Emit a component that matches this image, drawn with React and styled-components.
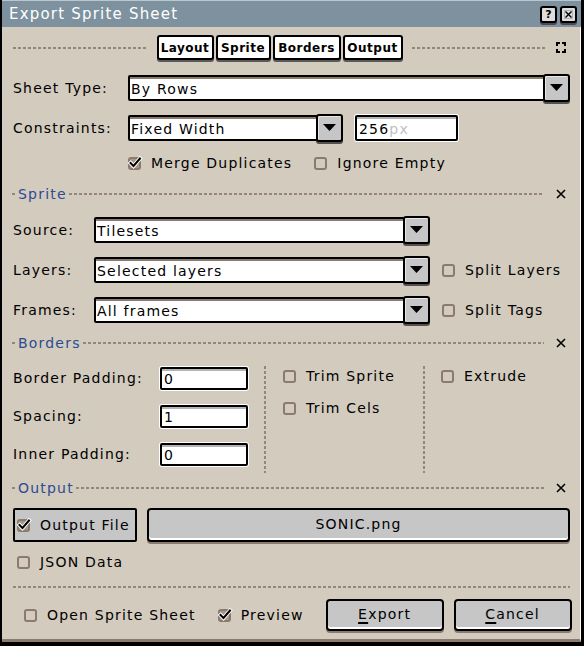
import React from 'react';
import styled, { createGlobalStyle } from 'styled-components';

const face = '#d3cbbe';
const shade = '#8b7b6e';
const dashColor = '#978575';
const blue = '#2c4c91';
const grey = '#c6c6c6';

const Global = createGlobalStyle`
  body {
    margin: 0;
    background: ${face};
  }
  * {
    box-sizing: border-box;
  }
`;

const Window = styled.div`
  width: 584px;
  height: 646px;
  display: flex;
  flex-direction: column;
  border-left: 2px solid #000;
  border-right: 3px solid #000;
  border-bottom: 4px solid #000;
  background: ${face};
  color: #000;
  font-family: 'DejaVu Sans', sans-serif;
  font-size: 14px;
  letter-spacing: 1.2px;
`;

const TitleBar = styled.div`
  height: 27px;
  flex: none;
  display: flex;
  align-items: center;
  padding: 0 4px 1px 7px;
  background: #7d929e;
  border-top: 1px solid #b9c7cf;
  color: #fff;
  font-size: 15px;
`;

const TitleButtons = styled.div`
  margin-left: auto;
  display: flex;
  gap: 3px;
  padding-top: 2px;
`;

const TitleButton = styled.div`
  width: 17px;
  height: 17px;
  display: flex;
  align-items: center;
  justify-content: center;
  background: #ddd;
  border: 2px solid #000;
  border-radius: 3px;
  box-shadow: 0 2px 0 #4e4650;
  color: #000;
  font-size: 11px;
  font-weight: bold;
  letter-spacing: 0;
`;

const Body = styled.div`
  flex: 1;
  display: flex;
  flex-direction: column;
  padding: 0 10px 0 11px;
  border-right: 1px solid #fff;
  border-bottom: 3px solid ${shade};
`;

const Dashes = styled.div`
  flex: ${(p) => (p.$fill ? 1 : 'none')};
  width: ${(p) => (p.$fill ? 'auto' : '100%')};
  height: 2px;
  background-image: repeating-linear-gradient(
    90deg,
    ${dashColor} 0 3px,
    transparent 3px 5px
  );
`;

const VDashes = styled.div`
  width: 2px;
  flex: none;
  align-self: flex-start;
  margin-top: 7px;
  height: 107px;
  background-image: repeating-linear-gradient(
    180deg,
    ${dashColor} 0 3px,
    transparent 3px 5px
  );
`;

const TabRow = styled.div`
  height: 41px;
  flex: none;
  display: flex;
  align-items: center;
  gap: 9px;
  padding-right: 4px;
`;

const Tabs = styled.div`
  display: flex;
  gap: 2px;
`;

const Tab = styled.div`
  width: ${(p) => p.$w}px;
  height: 25px;
  display: flex;
  align-items: center;
  justify-content: center;
  background: #fff;
  border: 2px solid #000;
  border-radius: 3px;
  box-shadow: 0 2px 0 #5a5a5a;
  font-size: 12px;
  font-weight: bold;
  letter-spacing: 0.5px;
`;

const Row = styled.div`
  height: ${(p) => p.$h}px;
  flex: none;
  display: flex;
  align-items: center;
  padding-left: ${(p) => p.$indent || 0}px;
  gap: ${(p) => p.$gap || 0}px;
`;

const Label = styled.div`
  width: ${(p) => p.$w}px;
  flex: none;
  white-space: nowrap;
`;

const Combo = styled.div`
  display: flex;
  align-items: center;
  flex: ${(p) => (p.$w ? 'none' : 1)};
  width: ${(p) => (p.$w ? `${p.$w}px` : 'auto')};
`;

const Field = styled.div`
  flex: 1;
  height: 26px;
  display: flex;
  align-items: center;
  padding: 2px 0 0 1px;
  background: #fff;
  border: 2px solid #000;
  border-radius: 2px;
  box-shadow: inset 0 2px 0 ${shade};
  white-space: nowrap;
`;

const DropButton = styled.div`
  width: 27px;
  height: 28px;
  flex: none;
  margin-left: -2px;
  display: flex;
  align-items: center;
  justify-content: center;
  background: ${grey};
  border: 2px solid #000;
  border-radius: 3px;
  box-shadow: inset 1px 1px 0 #e6e6e6, 0 2px 0 #55504c;
`;

const Input = styled.div`
  width: ${(p) => p.$w}px;
  height: ${(p) => p.$h}px;
  flex: none;
  display: flex;
  align-items: center;
  padding: 1px 0 0 2px;
  background: #fff;
  border: 2px solid #000;
  border-radius: 2px;
  box-shadow: 0 0 0 1px #fff, inset 0 2px 0 #b4b4b4;
`;

const Unit = styled.span`
  color: #c0c0c0;
`;

const CheckLabel = styled.div`
  display: flex;
  align-items: center;
  gap: 10px;
  white-space: nowrap;
`;

const SectionHead = styled.div`
  height: ${(p) => p.$h}px;
  flex: none;
  display: flex;
  align-items: center;
  gap: 2px;
  margin-left: -1px;
  padding-right: 4px;
`;

const SectionTitle = styled.div`
  color: ${blue};
`;

const CloseX = styled.div`
  margin-left: 10px;
  display: flex;
`;

const BordersBox = styled.div`
  height: 119px;
  flex: none;
  display: flex;
  padding-top: 3px;
`;

const LeftCol = styled.div`
  width: 251px;
  flex: none;
  display: flex;
  flex-direction: column;
`;

const CheckCol = styled.div`
  width: ${(p) => (p.$w ? `${p.$w}px` : 'auto')};
  flex: ${(p) => (p.$w ? 'none' : 1)};
  display: flex;
  flex-direction: column;
  padding: 1px 0 0 ${(p) => p.$pad}px;
`;

const Button = styled.div`
  height: ${(p) => p.$h}px;
  width: ${(p) => (p.$w ? `${p.$w}px` : 'auto')};
  flex: ${(p) => (p.$w ? 'none' : 1)};
  display: flex;
  align-items: center;
  justify-content: center;
  padding-bottom: 2px;
  background: ${grey};
  border: 2px solid #000;
  border-radius: 4px;
  box-shadow: inset 0 -2px 0 #fff, 0 2px 0 ${shade};
  white-space: nowrap;

  u {
    text-underline-offset: 3px;
    text-decoration-thickness: 2px;
  }
`;

const ToggleButton = styled.div`
  width: 124px;
  height: 34px;
  flex: none;
  display: flex;
  align-items: center;
  gap: 10px;
  padding-left: 2px;
  background: ${grey};
  border: 2px solid #000;
  border-radius: 2px;
  white-space: nowrap;
`;

const ButtonGroup = styled.div`
  margin-left: auto;
  display: flex;
  gap: 10px;
`;

const Box = ({ checked }) => (
  <svg width="13" height="13" viewBox="0 0 13 13" style={{ overflow: 'visible', flex: 'none' }}>
    <rect x="1" y="1" width="11" height="11" rx="2" fill={checked ? '#a89888' : 'none'} stroke={shade} strokeWidth="2" />
    {checked && (
      <>
        <polyline points="2.5,6 5.5,9 12,1.5" fill="none" stroke="#fff" strokeWidth="4" strokeLinecap="square" />
        <polyline points="2.5,6 5.5,9 12,1.5" fill="none" stroke="#000" strokeWidth="2" strokeLinecap="square" />
      </>
    )}
  </svg>
);

const Check = ({ checked, children }) => (
  <CheckLabel>
    <Box checked={checked} />
    <span>{children}</span>
  </CheckLabel>
);

const Arrow = () => (
  <svg width="13" height="8" viewBox="0 0 13 8">
    <polygon points="0,0 13,0 6.5,7" fill="#000" />
  </svg>
);

const XIcon = () => (
  <svg width="10" height="10" viewBox="0 0 10 10">
    <path d="M1 1 L9 9 M9 1 L1 9" stroke="#000" strokeWidth="1.6" />
  </svg>
);

const ExpandIcon = () => (
  <svg width="10" height="11" viewBox="0 0 10 11" style={{ marginLeft: 1 }}>
    <path
      d="M0 0h4v2H2v2H0z M10 0H6v2h2v2h2z M0 11h4V9H2V7H0z M10 11H6V9h2V7h2z"
      fill="#000"
    />
  </svg>
);

const SelectBox = ({ value, w }) => (
  <Combo $w={w}>
    <Field>{value}</Field>
    <DropButton>
      <Arrow />
    </DropButton>
  </Combo>
);

const Section = ({ title, h }) => (
  <SectionHead $h={h}>
    <Dashes style={{ width: 4 }} />
    <SectionTitle>{title}</SectionTitle>
    <Dashes $fill />
    <CloseX>
      <XIcon />
    </CloseX>
  </SectionHead>
);

const App = () => (
  <>
    <Global />
    <Window>
      <TitleBar>
        <span>Export Sprite Sheet</span>
        <TitleButtons>
          <TitleButton>?</TitleButton>
          <TitleButton>
            <svg width="9" height="9" viewBox="0 0 9 9">
              <rect x="0.5" y="0.5" width="8" height="8" fill="none" stroke="#888" strokeDasharray="1 1" />
              <path d="M1.5 1.5 L7.5 7.5 M7.5 1.5 L1.5 7.5" stroke="#000" strokeWidth="1.4" />
            </svg>
          </TitleButton>
        </TitleButtons>
      </TitleBar>

      <Body>
        <TabRow>
          <Dashes $fill />
          <Tabs>
            <Tab $w={57}>Layout</Tab>
            <Tab $w={55}>Sprite</Tab>
            <Tab $w={68}>Borders</Tab>
            <Tab $w={60}>Output</Tab>
          </Tabs>
          <Dashes $fill />
          <ExpandIcon />
        </TabRow>

        <Row $h={40}>
          <Label $w={115}>Sheet Type:</Label>
          <SelectBox value="By Rows" />
        </Row>

        <Row $h={40}>
          <Label $w={115}>Constraints:</Label>
          <SelectBox value="Fixed Width" w={215} />
          <Input $w={103} $h={26} style={{ marginLeft: 12 }}>
            256<Unit>px</Unit>
          </Input>
        </Row>

        <Row $h={30} $indent={115} $gap={22}>
          <Check checked>Merge Duplicates</Check>
          <Check>Ignore Empty</Check>
        </Row>

        <Section title="Sprite" h={32} />

        <Row $h={40} $gap={12}>
          <Label $w={69}>Source:</Label>
          <SelectBox value="Tilesets" w={336} />
        </Row>
        <Row $h={40} $gap={12}>
          <Label $w={69}>Layers:</Label>
          <SelectBox value="Selected layers" w={336} />
          <Check>Split Layers</Check>
        </Row>
        <Row $h={40} $gap={12}>
          <Label $w={69}>Frames:</Label>
          <SelectBox value="All frames" w={336} />
          <Check>Split Tags</Check>
        </Row>

        <Section title="Borders" h={26} />

        <BordersBox>
          <LeftCol>
            <Row $h={38}>
              <Label $w={147}>Border Padding:</Label>
              <Input $w={88} $h={23}>0</Input>
            </Row>
            <Row $h={38}>
              <Label $w={147}>Spacing:</Label>
              <Input $w={88} $h={23}>1</Input>
            </Row>
            <Row $h={38}>
              <Label $w={147}>Inner Padding:</Label>
              <Input $w={88} $h={23}>0</Input>
            </Row>
          </LeftCol>
          <VDashes />
          <CheckCol $w={157} $pad={17}>
            <Row $h={32}>
              <Check>Trim Sprite</Check>
            </Row>
            <Row $h={32}>
              <Check>Trim Cels</Check>
            </Row>
          </CheckCol>
          <VDashes />
          <CheckCol $pad={16}>
            <Row $h={32}>
              <Check>Extrude</Check>
            </Row>
          </CheckCol>
        </BordersBox>

        <Section title="Output" h={26} />

        <Row $h={48} $gap={10}>
          <ToggleButton>
            <Box checked />
            <span>Output File</span>
          </ToggleButton>
          <Button $h={34}>SONIC.png</Button>
        </Row>

        <Row $h={26} $indent={4}>
          <Check>JSON Data</Check>
        </Row>

        <Row $h={24}>
          <Dashes $fill />
        </Row>

        <Row $h={32} $indent={11} $gap={22}>
          <Check>Open Sprite Sheet</Check>
          <Check checked>Preview</Check>
          <ButtonGroup>
            <Button $h={32} $w={118}>
              <span>
                <u>E</u>xport
              </span>
            </Button>
            <Button $h={32} $w={118}>
              <span>
                <u>C</u>ancel
              </span>
            </Button>
          </ButtonGroup>
        </Row>
      </Body>
    </Window>
  </>
);

export default App;
